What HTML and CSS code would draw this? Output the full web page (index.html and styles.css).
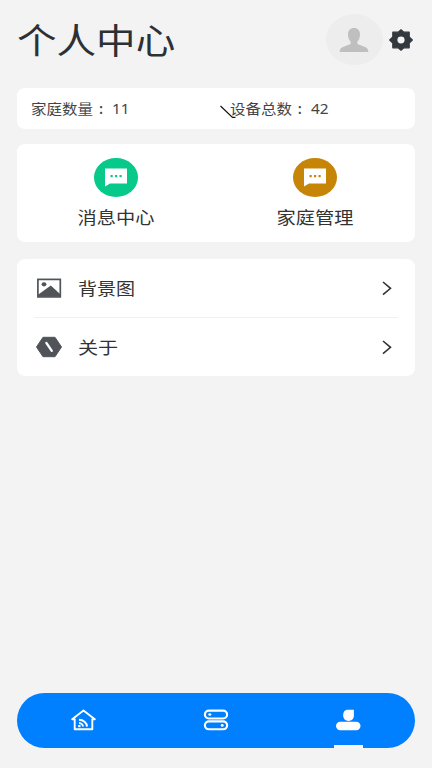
FILE: index.html
```html
<!DOCTYPE html>
<html lang="zh-CN">
<head>
<meta charset="utf-8">
<title>个人中心</title>
<link rel="stylesheet" href="styles.css">
</head>
<body>
<div class="page">
  <header class="header">
    <h1 class="title">个人中心</h1>
    <div class="avatar">
      <svg width="30" height="26" viewBox="0 0 30 26"><path fill="#bfbfbf" d="M15 1C18.800 1 21 3.500 21 7.500C21 10.500 20 13 18.400 14.500V17L26 20C28.500 21 29.300 22.500 29.300 25H.7C.7 22.500 1.500 21 4 20L11.600 17V14.500C10 13 9 10.500 9 7.500C9 3.500 11.200 1 15 1Z"/></svg>
    </div>
    <svg class="gear" width="24" height="22" viewBox="0 0 24 22"><path fill="#33373e" stroke="#33373e" stroke-width="1.200" stroke-linejoin="round" d="M12 .8L14.800 3.200H20.200V8L23.300 11L20.200 14V18.800H14.800L12 21.200L9.200 18.800H3.800V14L.7 11L3.800 8V3.200H9.200Z"/><ellipse cx="12" cy="11" rx="3.600" ry="3.400" fill="#f3f3f3"/></svg>
  </header>

  <section class="card stats">
    <div class="stat"><span class="label">家庭数量</span><span class="colon">:</span><span class="value">11</span></div>
    <div class="stat"><span class="label">设备总数</span><span class="colon">:</span><span class="value">42</span></div>
    <svg class="pointer" width="18" height="14" viewBox="0 0 18 14"><path d="M1.500 1L13.500 12.400H16.500" fill="none" stroke="#111" stroke-width="1.200"/></svg>
  </section>

  <section class="card features">
    <div class="feature">
      <div class="bubble green"><svg width="22" height="19" viewBox="0 0 22 19"><path fill="#fff" d="M0 .5H22V15.500H5L0 18.500Z"/><path d="M5.500 7h2.200v2.200h-2.200zM10 7h2.200v2.200h-2.200zM14.500 7h2.200v2.200h-2.200z"/></svg></div>
      <span class="feature-name">消息中心</span>
    </div>
    <div class="feature">
      <div class="bubble amber"><svg width="22" height="19" viewBox="0 0 22 19"><path fill="#fff" d="M0 .5H22V15.500H5L0 18.500Z"/><path d="M5.500 7h2.200v2.200h-2.200zM10 7h2.200v2.200h-2.200zM14.500 7h2.200v2.200h-2.200z"/></svg></div>
      <span class="feature-name">家庭管理</span>
    </div>
  </section>

  <section class="card menu">
    <div class="row">
      <svg class="row-icon" width="26" height="22" viewBox="0 0 26 22"><rect x="1.900" y="2.400" width="22.400" height="17.500" fill="none" stroke="#505459" stroke-width="1.700"/><path fill="#505459" d="M2 19.500V17.800L14.800 8.500L24 17V19.500Z"/><ellipse cx="8" cy="7.300" rx="2.400" ry="2.100" fill="#505459"/></svg>
      <span class="row-name">背景图</span>
      <svg class="chevron" width="12" height="16" viewBox="0 0 12 16"><path d="M2 2L9.500 8.300L2 14.600" fill="none" stroke="#333" stroke-width="1.600"/></svg>
    </div>
    <div class="row">
      <svg class="row-icon" width="26" height="22" viewBox="0 0 26 22"><path fill="#505459" stroke="#505459" stroke-width="1" stroke-linejoin="round" d="M7 1.300H19L25.500 11L19 20.700H7L.5 11Z"/><path d="M10.400 7L15.800 14.800" stroke="#fff" stroke-width="2.300" stroke-linecap="round"/></svg>
      <span class="row-name about">关于</span>
      <svg class="chevron" width="12" height="16" viewBox="0 0 12 16"><path d="M2 2L9.500 8.300L2 14.600" fill="none" stroke="#333" stroke-width="1.600"/></svg>
    </div>
  </section>

  <nav class="tabs">
    <div class="tab"><svg width="26" height="24" viewBox="0 0 26 24" fill="none" stroke="#fff" stroke-width="1.900" stroke-linejoin="round"><path d="M2.200 11.200L13.500 2.500L24.800 11.200H22.300V21.300H4.700V11.200Z"/><path d="M9 11.800A8 7 0 0 1 17 18.600M9 15A4.200 3.600 0 0 1 13 18.600"/><path d="M8.200 17H10.500V19.200H8.200Z" fill="#fff" stroke="none"/></svg></div>
    <div class="tab"><svg width="26" height="24" viewBox="0 0 26 24" fill="none" stroke="#fff" stroke-width="2.100"><rect x="1.900" y="2.600" width="22.200" height="7.900" rx="4"/><rect x="1.900" y="13.400" width="22.200" height="7.900" rx="4"/><ellipse cx="6.800" cy="6.500" rx="1.500" ry="1.300" fill="#fff" stroke="none"/><ellipse cx="19.200" cy="17.400" rx="1.500" ry="1.300" fill="#fff" stroke="none"/></svg></div>
    <div class="tab active"><svg width="26" height="24" viewBox="0 0 26 24" fill="#fff"><path d="M12.800 1.800H18.900V7.800C18.900 10.900 16.700 12.900 13.500 12.900C10.300 12.900 8.200 10.900 8.200 7.300C8.200 4 9.800 1.800 12.800 1.800Z"/><rect x="1" y="13.800" width="24.500" height="8.500" rx="4.200"/></svg></div>
  </nav>
</div>
</body>
</html>
```
FILE: styles.css
```css
* { box-sizing: border-box; }

body {
  margin: 0;
  background: #f3f3f3;
  color: #333;
  font-family: "Noto Sans CJK SC", sans-serif;
}

svg { display: block; flex: none; }

.page {
  height: 768px;
  padding: 14px 17.500px 20.500px 17px;
  display: flex;
  flex-direction: column;
  overflow: hidden;
}

.header {
  height: 51px;
  display: flex;
  align-items: center;
  margin-bottom: 23px;
}

/* Lettering is slightly wider than tall throughout the interface. */
.title {
  margin: -2px auto 0 0;
  font-size: 35px;
  font-weight: 400;
  line-height: 51px;
  color: #2d3034;
  transform: scaleX(1.130);
  transform-origin: left;
}

.avatar {
  width: 57px;
  height: 51px;
  border-radius: 50%;
  background: #ededed;
  display: flex;
  align-items: center;
  justify-content: center;
}

.gear { margin: 0 1.500px 0 6.500px; }

.card {
  background: #fff;
  border-radius: 8px;
}

.stats {
  position: relative;
  height: 40.500px;
  display: flex;
  margin-bottom: 15.500px;
}

.stat {
  width: 199px;
  padding-left: 14px;
  display: flex;
  align-items: center;
  font-size: 13.700px;
  color: #444;
}

.stat .label {
  width: 62px;
  white-space: nowrap;
  transform: scaleX(1.130);
  transform-origin: left;
}

.colon { width: 19px; padding-left: 6px; font-weight: 500; }

.value {
  padding-top: 1px;
  font-family: "Noto Sans", sans-serif;
  font-size: 13.500px;
  transform: scaleX(1.140);
  transform-origin: left;
}

.pointer {
  position: absolute;
  left: 202px;
  top: 17px;
}

.features {
  height: 98px;
  display: flex;
  margin-bottom: 16.500px;
}

.feature {
  flex: 1;
  padding-top: 14px;
  display: flex;
  flex-direction: column;
  align-items: center;
}

.bubble {
  width: 44px;
  height: 39px;
  border-radius: 50%;
  display: flex;
  align-items: center;
  justify-content: center;
}

.green { background: #07c989; fill: #07c989; }
.amber { background: #c78507; fill: #c78507; }

.feature-name {
  margin-top: 6.500px;
  font-size: 17px;
  line-height: 25px;
  transform: scaleX(1.130);
}

.menu {
  height: 117.500px;
  padding: 0 17px;
}

.row {
  height: 58px;
  padding: 0 5px 0 2px;
  display: flex;
  align-items: center;
}

.row + .row {
  height: 59.500px;
  border-top: 1px solid #f0f0f0;
}

.row-name {
  margin: -1px auto 0 16px;
  font-size: 17px;
  line-height: 25px;
  transform: scaleX(1.120);
  transform-origin: left;
}

.about { font-size: 17.500px; transform: scaleX(1.150); }

.tabs {
  height: 55px;
  margin-top: auto;
  border-radius: 28px;
  background: #007fff;
  display: flex;
}

.tab {
  position: relative;
  flex: 1;
  display: flex;
  align-items: center;
  justify-content: center;
}

.active::after {
  content: "";
  position: absolute;
  bottom: 0;
  left: 51.500px;
  width: 29px;
  height: 2.500px;
  background: #f7f7f7;
}
```
